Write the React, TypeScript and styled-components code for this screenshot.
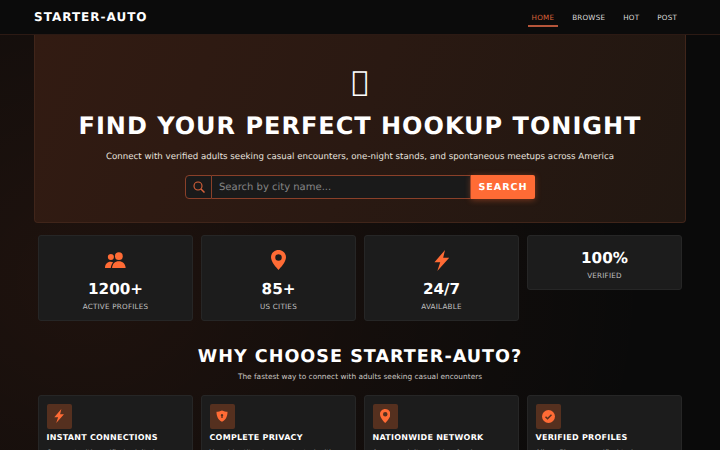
import React from "react";
import styled, { createGlobalStyle } from "styled-components";

const Global = createGlobalStyle`
  html, body { margin: 0; padding: 0; height: 450px; overflow: hidden; }
  body {
    font-family: "DejaVu Sans", sans-serif;
    color: #fff;
    background: #0a0a0a;
    text-rendering: geometricPrecision;
  }
  * { box-sizing: border-box; }
`;

const Page = styled.div`
  width: 720px;
  height: 450px;
  overflow: hidden;
  background:
    radial-gradient(ellipse 560px 520px at 12% 62%, rgba(255, 107, 53, 0.085), transparent 100%),
    #0a0a0a;
`;

const Nav = styled.nav`
  height: 35px;
  padding: 0 39px 0 34px;
  display: flex;
  align-items: center;
  justify-content: space-between;
  background: #0b0b0b;
  border-bottom: 1px solid #2c1a14;
`;

const Brand = styled.div`
  font-size: 12px;
  font-weight: 700;
  letter-spacing: 1px;
  color: #fff;
`;

const Links = styled.div`
  display: flex;
  align-items: center;
  gap: 10px;
`;

const NavLink = styled.a<{ $active?: boolean }>`
  display: block;
  font-size: 7.2px;
  line-height: 9px;
  letter-spacing: 0.2px;
  padding: 5px 4px 3px;
  color: ${(p) => (p.$active ? "#d9623a" : "#dcdcdc")};
  border-bottom: 2px solid ${(p) => (p.$active ? "#b5553a" : "transparent")};
`;

const Main = styled.main`
  padding: 0 34px;
`;

const Hero = styled.section`
  height: 188px;
  padding-top: 29.5px;
  display: flex;
  flex-direction: column;
  align-items: center;
  border: 1px solid #40251a;
  border-top: none;
  border-radius: 0 0 4px 4px;
  background: linear-gradient(110deg, #321b12 0%, #2a1912 50%, #211711 100%);
`;

const HeroGlyph = styled.div`
  font-size: 28px;
  line-height: 34px;
  color: #fff;
`;

const HeroTitle = styled.h1`
  margin: 13.5px 0 0;
  font-size: 24px;
  line-height: 28px;
  font-weight: 700;
  letter-spacing: 1px;
  white-space: nowrap;
`;

const HeroText = styled.p`
  margin: 10.5px 0 0;
  font-size: 8.66px;
  line-height: 12px;
  color: #e6e1de;
  white-space: nowrap;
`;

const SearchBar = styled.form`
  margin-top: 12.5px;
  display: flex;
  width: 350px;
  height: 24px;
`;

const SearchIconBox = styled.span`
  width: 27px;
  display: flex;
  align-items: center;
  justify-content: center;
  background: #1a1a1a;
  border: 1px solid #8a4029;
  border-radius: 4px 0 0 4px;
  color: #d9623a;
`;

const SearchInput = styled.div`
  flex: 1;
  padding-left: 7px;
  display: flex;
  align-items: center;
  background: #1a1a1a;
  border: 1px solid #8a4029;
  border-left: none;
  font-size: 10px;
  color: #858585;
`;

const SearchButton = styled.button`
  width: 64px;
  border: none;
  padding: 0;
  background: #ff6b35;
  border-radius: 0 2px 2px 0;
  color: #fff;
  font-family: inherit;
  font-size: 9.6px;
  font-weight: 700;
  letter-spacing: 0.96px;
  text-rendering: geometricPrecision;
  box-shadow: 0 1px 6px rgba(255, 107, 53, 0.4);
`;

const Grid = styled.div<{ $top: number }>`
  margin: ${(p) => p.$top}px 4px 0;
  display: grid;
  grid-template-columns: repeat(4, 1fr);
  gap: 8px;
  align-items: start;
`;

const StatCard = styled.div`
  padding: 13px 8px 9px;
  display: flex;
  flex-direction: column;
  align-items: center;
  background: #1c1c1c;
  border: 1px solid #262626;
  border-radius: 3px;
`;

const StatIcon = styled.div`
  height: 22px;
  margin-bottom: 9px;
  display: flex;
  align-items: center;
  justify-content: center;
  color: #ff6b35;
`;

const StatValue = styled.div`
  font-size: 15.2px;
  line-height: 18px;
  font-weight: 700;
`;

const StatLabel = styled.div`
  margin-top: 4px;
  font-size: 7.2px;
  line-height: 9px;
  letter-spacing: 0.22px;
  color: #c0c0c0;
`;

const SectionTitle = styled.h2`
  margin: 24.5px 0 0;
  text-align: center;
  font-size: 17.6px;
  line-height: 23px;
  font-weight: 700;
  letter-spacing: 1px;
`;

const SectionText = styled.p`
  margin: 2.5px 0 0;
  text-align: center;
  font-size: 7.4px;
  line-height: 12px;
  color: #cac6c3;
`;

const FeatureCard = styled.div`
  padding: 7.5px;
  height: 90px;
  background: #1c1c1c;
  border: 1px solid #262626;
  border-radius: 3px;
`;

const FeatureIcon = styled.div`
  width: 25px;
  height: 25px;
  display: flex;
  align-items: center;
  justify-content: center;
  background: #55301f;
  border-radius: 2px;
  color: #ff6b35;
`;

const FeatureTitle = styled.h3`
  margin: 3px 0 0;
  font-size: 8px;
  line-height: 11px;
  font-weight: 700;
  letter-spacing: 0.25px;
  white-space: nowrap;
`;

const FeatureText = styled.p`
  margin: 4.5px 0 0;
  font-size: 7.4px;
  line-height: 12px;
  color: #b4b4b4;
`;

const Users = ({ size }: { size: number }) => (
  <svg width={size} height={size * 0.8} viewBox="0 0 25 20" fill="currentColor">
    <circle cx="7" cy="6" r="3.600" />
    <circle cx="16.500" cy="5" r="4.600" />
    <path d="M0 19c.2-4.600 2.600-7.400 6.600-7.400 1.300 0 2.300.3 3.200.8-1.800 1.600-2.700 3.900-2.900 6.600z" />
    <path d="M8.400 19c.3-5 3.400-8 8-8s7.900 3 8.200 8z" />
  </svg>
);

const Pin = ({ size }: { size: number }) => (
  <svg width={size * 0.75} height={size} viewBox="0 0 18 24">
    <path
      fill="currentColor"
      fillRule="evenodd"
      d="M9 0C4 0 0 3.900 0 8.800 0 14.600 7 21.800 9 24c2-2.200 9-9.400 9-15.200C18 3.900 14 0 9 0zm0 5a3.900 3.900 0 1 1 0 7.800A3.900 3.900 0 0 1 9 5z"
    />
  </svg>
);

const Bolt = ({ size }: { size: number }) => (
  <svg width={size * 0.75} height={size} viewBox="0 0 18 24" fill="currentColor">
    <path d="M12.600 0 0.500 14h6.600L3.800 24 17.500 8.800h-7z" />
  </svg>
);

const Shield = ({ size }: { size: number }) => (
  <svg width={size} height={size} viewBox="0 0 24 24">
    <path
      fill="currentColor"
      fillRule="evenodd"
      d="M12 1c4 1.800 7.500 2.400 11 2.400 0 9-3 16-11 20C4 19.400 1 12.400 1 3.400 4.500 3.400 8 2.800 12 1zm0 7a2.500 2.500 0 0 0-1.300 4.600V16h2.600v-3.400A2.500 2.500 0 0 0 12 8z"
    />
  </svg>
);

const Check = ({ size }: { size: number }) => (
  <svg width={size} height={size} viewBox="0 0 24 24">
    <circle cx="12" cy="12" r="12" fill="currentColor" />
    <path d="M6.500 12.500l3.700 3.700 7.300-7.500" fill="none" stroke="#55301f" strokeWidth="2.800" />
  </svg>
);

const Search = () => (
  <svg width="12" height="12" viewBox="0 0 12 12" fill="none" stroke="currentColor" strokeWidth="1.100">
    <circle cx="5" cy="5" r="4" />
    <path d="M8 8l3.500 3.500" strokeWidth="1.500" />
  </svg>
);

const stats = [
  { icon: <Users size={21} />, value: "1200+", label: "ACTIVE PROFILES" },
  { icon: <Pin size={20} />, value: "85+", label: "US CITIES" },
  { icon: <Bolt size={21} />, value: "24/7", label: "AVAILABLE" },
  { icon: null, value: "100%", label: "VERIFIED" },
];

const features = [
  {
    icon: <Bolt size={14} />,
    title: "INSTANT CONNECTIONS",
    text: "Connect with verified adults in your area instantly, any time of day.",
  },
  {
    icon: <Shield size={12} />,
    title: "COMPLETE PRIVACY",
    text: "Your identity stays protected with discreet and secure messaging.",
  },
  {
    icon: <Pin size={14} />,
    title: "NATIONWIDE NETWORK",
    text: "Access adults seeking fun in every major city across America.",
  },
  {
    icon: <Check size={13} />,
    title: "VERIFIED PROFILES",
    text: "All profiles are verified to keep our community real and safe.",
  },
];

export default function App() {
  return (
    <Page>
      <Global />
      <Nav>
        <Brand>STARTER-AUTO</Brand>
        <Links>
          <NavLink $active>HOME</NavLink>
          <NavLink>BROWSE</NavLink>
          <NavLink>HOT</NavLink>
          <NavLink>POST</NavLink>
        </Links>
      </Nav>
      <Main>
        <Hero>
          <HeroGlyph>{"\uf06d"}</HeroGlyph>
          <HeroTitle>FIND YOUR PERFECT HOOKUP TONIGHT</HeroTitle>
          <HeroText>
            Connect with verified adults seeking casual encounters, one-night stands, and spontaneous meetups across America
          </HeroText>
          <SearchBar>
            <SearchIconBox>
              <Search />
            </SearchIconBox>
            <SearchInput>Search by city name...</SearchInput>
            <SearchButton type="button">SEARCH</SearchButton>
          </SearchBar>
        </Hero>
        <Grid $top={12}>
          {stats.map((s) => (
            <StatCard key={s.label}>
              {s.icon && <StatIcon>{s.icon}</StatIcon>}
              <StatValue>{s.value}</StatValue>
              <StatLabel>{s.label}</StatLabel>
            </StatCard>
          ))}
        </Grid>
        <SectionTitle>WHY CHOOSE STARTER-AUTO?</SectionTitle>
        <SectionText>The fastest way to connect with adults seeking casual encounters</SectionText>
        <Grid $top={12}>
          {features.map((f) => (
            <FeatureCard key={f.title}>
              <FeatureIcon>{f.icon}</FeatureIcon>
              <FeatureTitle>{f.title}</FeatureTitle>
              <FeatureText>{f.text}</FeatureText>
            </FeatureCard>
          ))}
        </Grid>
      </Main>
    </Page>
  );
}
